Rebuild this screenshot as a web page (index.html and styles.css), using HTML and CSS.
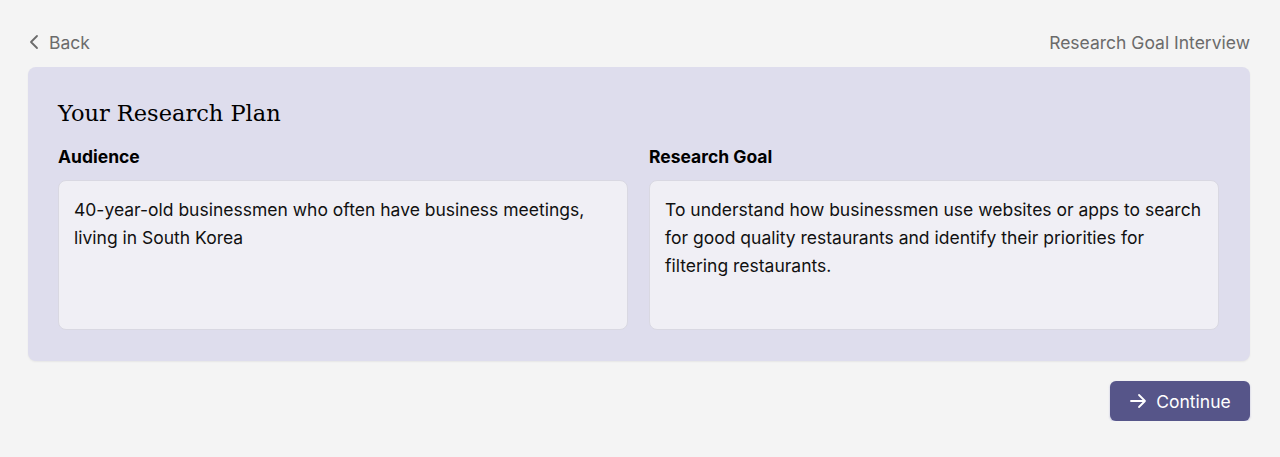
FILE: index.html
```html
<!DOCTYPE html>
<html>
<head>
<meta charset="utf-8">
<link rel="stylesheet" href="styles.css">
</head>
<body>
<div class="page">
  <header class="topbar">
    <a class="back" href="#">
      <svg width="14" height="18" viewBox="0 0 14 18" fill="none"><path d="M9 3 L3 9 L9 15" stroke="#6b6b6b" stroke-width="1.8" stroke-linecap="round" stroke-linejoin="round"/></svg>
      <span>Back</span>
    </a>
    <div class="crumb">Research Goal Interview</div>
  </header>
  <section class="card">
    <h1 class="title">Your Research Plan</h1>
    <div class="cols">
      <div class="col">
        <div class="label">Audience</div>
        <div class="box">40-year-old businessmen who often have business meetings, living in South Korea</div>
      </div>
      <div class="col">
        <div class="label">Research Goal</div>
        <div class="box">To understand how businessmen use websites or apps to search for good quality restaurants and identify their priorities for filtering restaurants.</div>
      </div>
    </div>
  </section>
  <div class="actions">
    <button class="btn">
      <svg width="18" height="18" viewBox="0 0 18 18" fill="none"><path d="M2 9 H16 M10 3 L16 9 L10 15" stroke="#fff" stroke-width="1.8" stroke-linecap="round" stroke-linejoin="round"/></svg>
      <span>Continue</span>
    </button>
  </div>
</div>
</body>
</html>
```
FILE: styles.css
```css
* { box-sizing: border-box; }
html, body { margin: 0; padding: 0; }
body {
  background: #f4f4f4;
  font-family: Inter, "Noto Sans", sans-serif;
  color: #111;
}
.page {
  padding: 28px 30px 0 28px;
}
.topbar {
  display: flex;
  justify-content: space-between;
  align-items: center;
  height: 28px;
  margin-bottom: 11px;
}
.back {
  display: flex;
  align-items: center;
  gap: 7px;
  color: #6b6b6b;
  text-decoration: none;
  font-size: 17.5px;
}
.crumb {
  color: #6b6b6b;
  font-size: 17.5px;
}
.card {
  background: #dedded;
  border-radius: 8px;
  padding: 30px 31px 31px 30px;
  box-shadow: 0 1px 2px rgba(0,0,0,0.06);
}
.title {
  margin: 0 0 16px 0;
  font-family: "DejaVu Serif", serif;
  font-weight: normal;
  font-size: 22.5px;
  line-height: 32px;
  color: #000;
}
.cols {
  display: grid;
  grid-template-columns: 1fr 1fr;
  gap: 21px;
}
.label {
  font-weight: 700;
  font-size: 17.5px;
  line-height: 24px;
  margin-bottom: 11px;
  color: #000;
}
.box {
  background: #f0eff5;
  border: 1px solid #d9d8e2;
  border-radius: 8px;
  height: 150px;
  padding: 15px;
  font-size: 17.5px;
  line-height: 28px;
  color: #111;
}
.actions {
  display: flex;
  justify-content: flex-end;
  margin-top: 20px;
}
.btn {
  display: flex;
  align-items: center;
  justify-content: center;
  gap: 9px;
  background: #565589;
  color: #fff;
  border: none;
  border-radius: 6px;
  height: 40px;
  width: 140px;
  font-family: Inter, sans-serif;
  font-size: 17.5px;
  box-shadow: 0 1px 2px rgba(60,60,160,0.35);
}
```
